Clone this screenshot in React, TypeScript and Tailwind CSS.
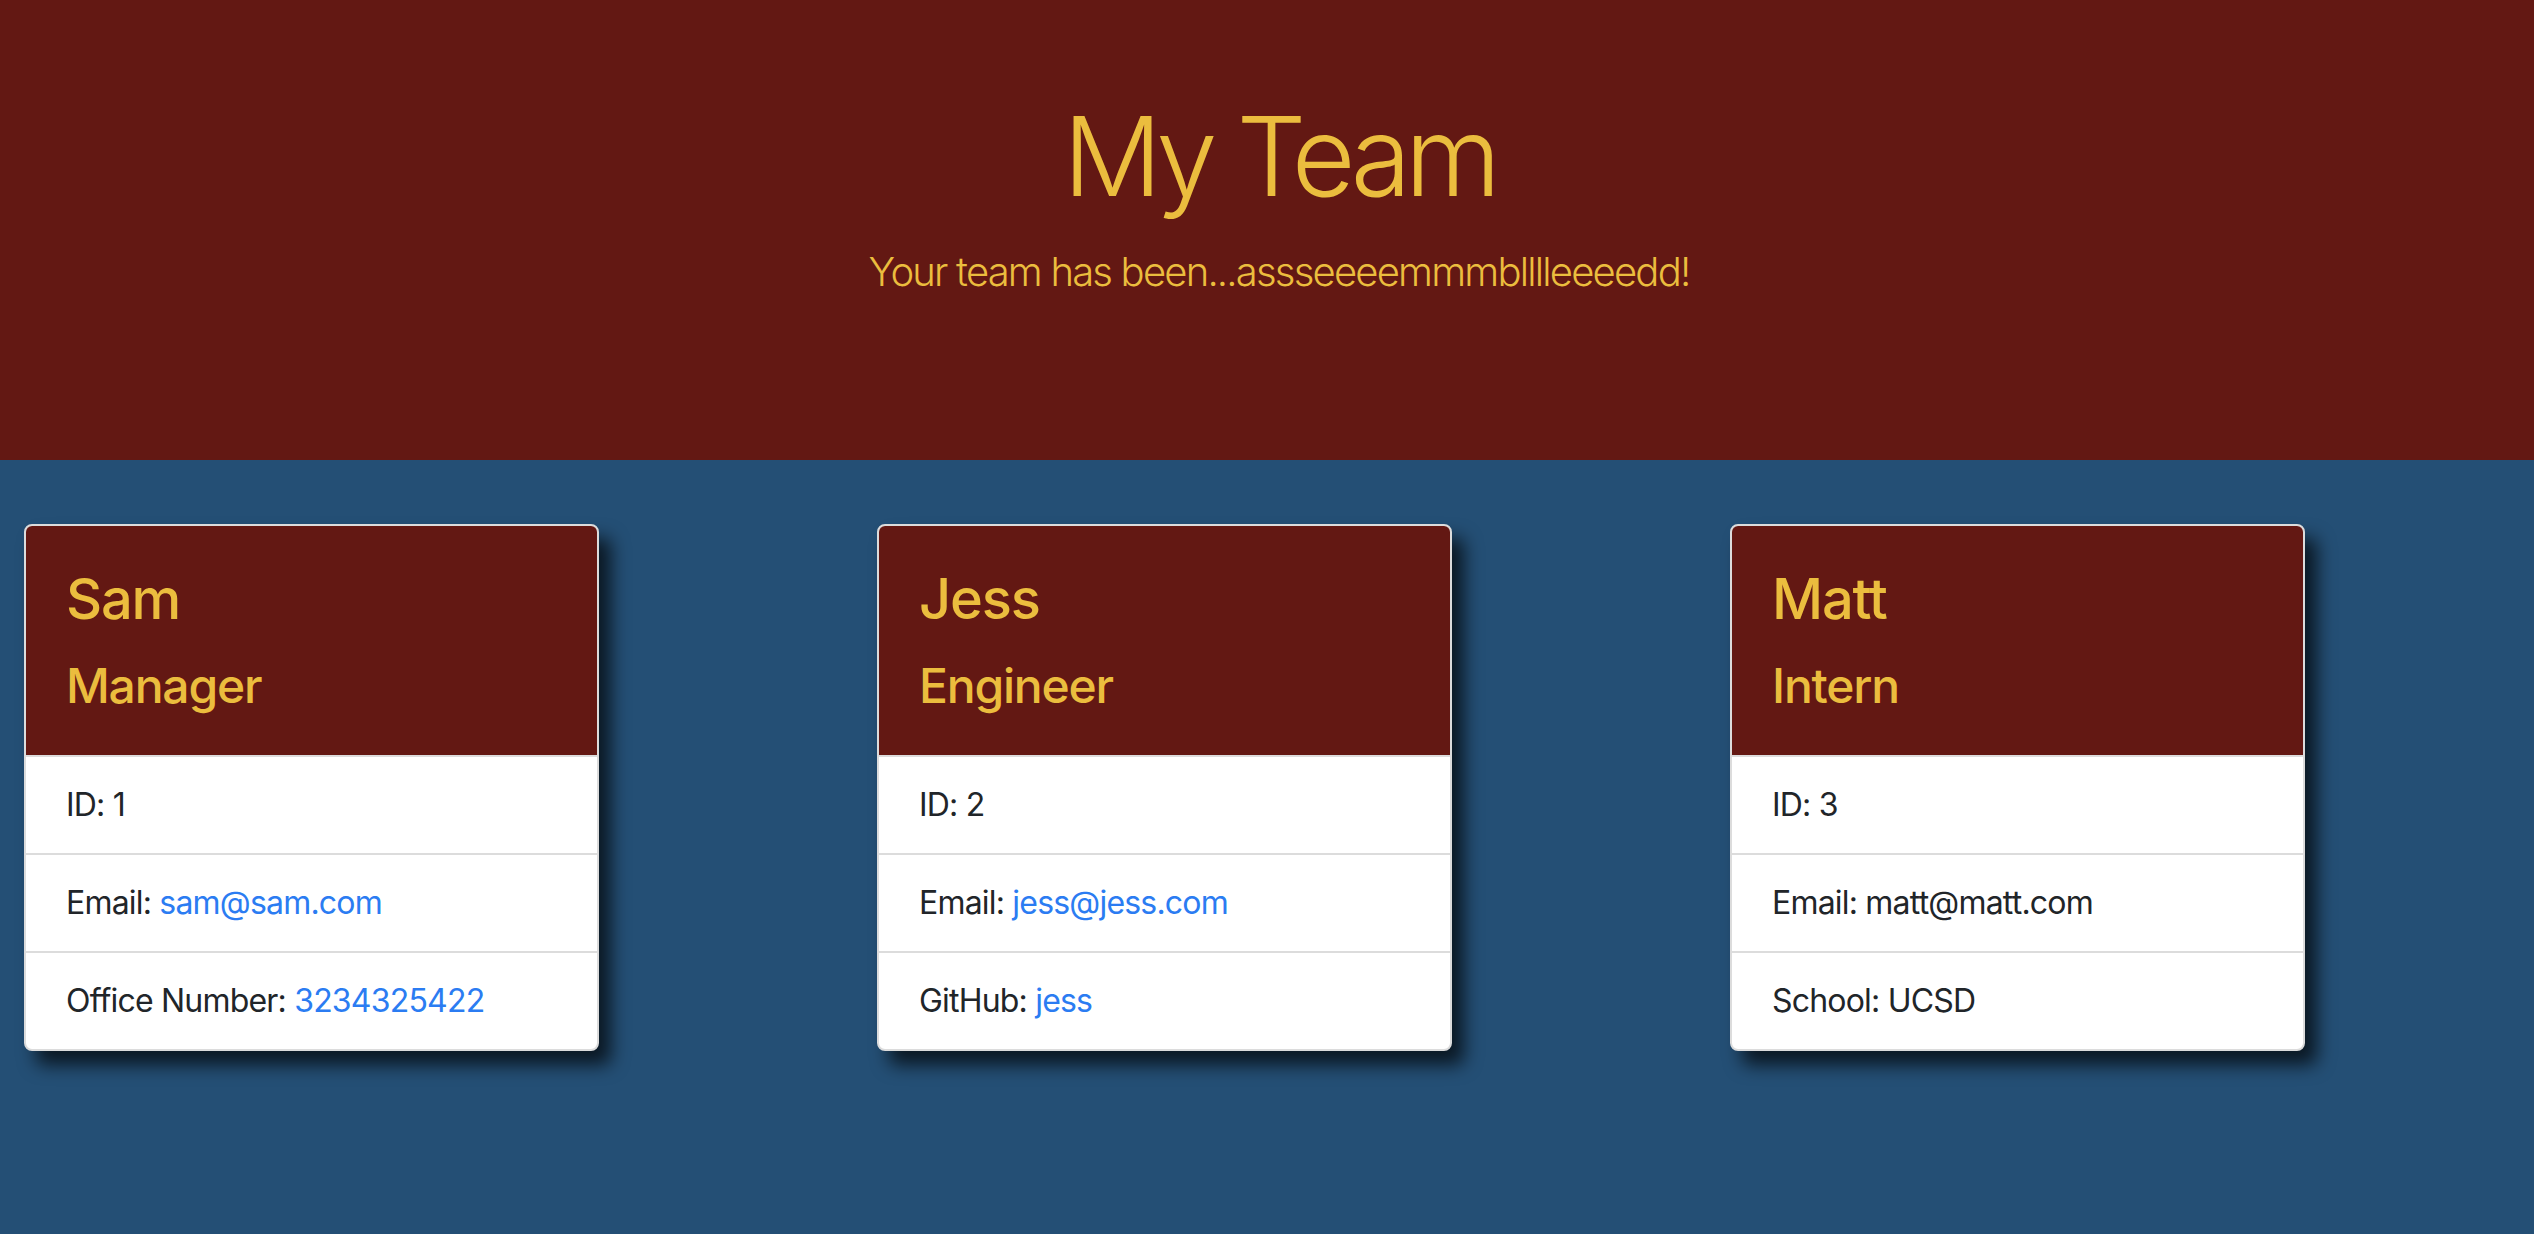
const team = [
  { name: 'Sam', role: 'Manager', id: 1, email: 'sam@sam.com', emailLink: true, extraLabel: 'Office Number', extra: '3234325422', extraLink: true },
  { name: 'Jess', role: 'Engineer', id: 2, email: 'jess@jess.com', emailLink: true, extraLabel: 'GitHub', extra: 'jess', extraLink: true },
  { name: 'Matt', role: 'Intern', id: 3, email: 'matt@matt.com', emailLink: false, extraLabel: 'School', extra: 'UCSD', extraLink: false },
];

function Card({ member }) {
  return (
    <div className="w-[575px] rounded-[8px] border-2 border-[#dcdcdc] bg-white shadow-[12px_14px_18px_rgba(0,0,0,0.7)] overflow-hidden">
      <div className="bg-[#631813] px-[40px] pt-[40px] pb-[40px] text-[#ebbd3e]">
        <h3 className="text-[56px] font-medium leading-[1.2] mb-[24px] tracking-[-1.2px]">{member.name}</h3>
        <h4 className="text-[48px] font-medium leading-[1.2] tracking-[-1.2px]">{member.role}</h4>
      </div>
      <ul className="text-[32px] leading-[48px] text-[#212529] tracking-[-0.8px]">
        <li className="px-[40px] py-[24px] border-t-2 border-[#dcdcdc]">ID: {member.id}</li>
        <li className="px-[40px] py-[24px] border-t-2 border-[#dcdcdc]">
          Email:{' '}
          {member.emailLink ? <a href="#" className="text-[#2b7cf2]">{member.email}</a> : member.email}
        </li>
        <li className="px-[40px] py-[24px] border-t-2 border-[#dcdcdc]">
          {member.extraLabel}:{' '}
          {member.extraLink ? <a href="#" className="text-[#2b7cf2]">{member.extra}</a> : member.extra}
        </li>
      </ul>
    </div>
  );
}

export default function App() {
  return (
    <div className="min-h-screen bg-[#244f75]" style={{ fontFamily: 'Inter, "Noto Sans", sans-serif' }}>
      <header className="h-[460px] bg-[#631813] text-[#ebbd3e] flex flex-col items-center pl-[24px] pt-[90px]">
        <h1 className="text-[110px] font-light leading-[1.2] tracking-[-6px]">My Team</h1>
        <p className="text-[40px] font-light leading-[1.5] mt-[20px] tracking-[-1.8px]">Your team has been...assseeeemmmblllleeeedd!</p>
      </header>
      <main className="flex gap-[278px] pl-[24px] pt-[64px]">
        {team.map((m) => (
          <Card key={m.id} member={m} />
        ))}
      </main>
    </div>
  );
}
